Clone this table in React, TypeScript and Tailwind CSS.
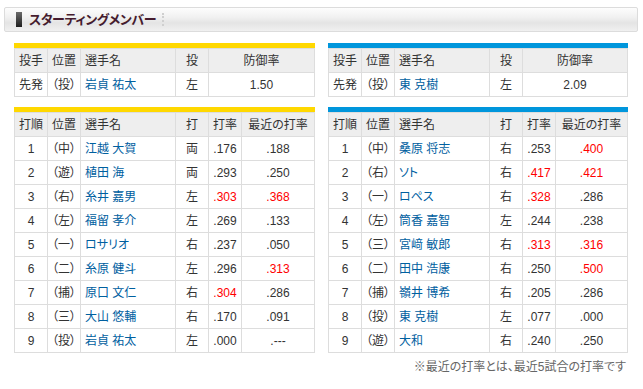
import React from 'react';

type Batter = [string, string, string, string, string, string, boolean, boolean];

const tigers: Batter[] = [
  ['1', '（中）', '江越 大賀', '両', '.176', '.188', false, false],
  ['2', '（遊）', '植田 海', '両', '.293', '.250', false, false],
  ['3', '（右）', '糸井 嘉男', '左', '.303', '.368', true, true],
  ['4', '（左）', '福留 孝介', '左', '.269', '.133', false, false],
  ['5', '（一）', 'ロサリオ', '右', '.237', '.050', false, false],
  ['6', '（二）', '糸原 健斗', '左', '.296', '.313', false, true],
  ['7', '（捕）', '原口 文仁', '右', '.304', '.286', true, false],
  ['8', '（三）', '大山 悠輔', '右', '.170', '.091', false, false],
  ['9', '（投）', '岩貞 祐太', '左', '.000', '.---', false, false],
];

const baystars: Batter[] = [
  ['1', '（中）', '桑原 将志', '右', '.253', '.400', false, true],
  ['2', '（右）', 'ソト', '右', '.417', '.421', true, true],
  ['3', '（一）', 'ロペス', '右', '.328', '.286', true, false],
  ['4', '（左）', '筒香 嘉智', '左', '.244', '.238', false, false],
  ['5', '（三）', '宮﨑 敏郎', '右', '.313', '.316', true, true],
  ['6', '（二）', '田中 浩康', '右', '.250', '.500', false, true],
  ['7', '（捕）', '嶺井 博希', '右', '.205', '.286', false, false],
  ['8', '（投）', '東 克樹', '左', '.077', '.000', false, false],
  ['9', '（遊）', '大和', '右', '.240', '.250', false, false],
];

const head = 'h-[23px] bg-[#eeeeee] flex items-center justify-center';
const cell = 'h-[23px] bg-white flex items-center justify-center';
const nameHead = 'h-[23px] bg-[#eeeeee] flex items-center pl-[4px]';
const nameCell = 'h-[23px] bg-white flex items-center pl-[4px] text-[#00609f]';

const PitcherTable = ({ bar, cols, name, era }: { bar: string; cols: string; name: string; era: string }) => (
  <div>
    <div className={`h-[5px] ${bar}`} />
    <div className={`grid ${cols} gap-px bg-[#dddddd] border border-[#dddddd]`}>
      <div className={head}>投手</div>
      <div className={head}>位置</div>
      <div className={nameHead}>選手名</div>
      <div className={head}>投</div>
      <div className={head}>防御率</div>
      <div className={cell}>先発</div>
      <div className={cell}>（投）</div>
      <div className={nameCell}>{name}</div>
      <div className={cell}>左</div>
      <div className={cell}>{era}</div>
    </div>
  </div>
);

const BattingTable = ({ bar, cols, rows }: { bar: string; cols: string; rows: Batter[] }) => (
  <div>
    <div className={`h-[5px] ${bar}`} />
    <div className={`grid ${cols} gap-px bg-[#dddddd] border border-[#dddddd]`}>
      <div className={head}>打順</div>
      <div className={head}>位置</div>
      <div className={nameHead}>選手名</div>
      <div className={head}>打</div>
      <div className={head}>打率</div>
      <div className={head}>最近の打率</div>
      {rows.map(r => (
        <React.Fragment key={r[0]}>
          <div className={cell}>{r[0]}</div>
          <div className={cell}>{r[1]}</div>
          <div className={nameCell}>{r[2]}</div>
          <div className={cell}>{r[3]}</div>
          <div className={`${cell} ${r[6] ? 'text-[#ff0000]' : ''}`}>{r[4]}</div>
          <div className={`${cell} ${r[7] ? 'text-[#ff0000]' : ''}`}>{r[5]}</div>
        </React.Fragment>
      ))}
    </div>
  </div>
);

export default function App() {
  return (
    <div className="w-[643px] h-[389px] bg-white pl-[4px] pt-[7px] text-[12px] leading-none text-[#333333] [font-family:'Liberation_Sans','Noto_Sans_CJK_JP',sans-serif] [font-feature-settings:'palt']">
      {/* title bar */}
      <div className="w-[634px] h-[25px] border border-[#dcdcdc] rounded-[2px] bg-[linear-gradient(to_bottom,#fdfdfd_0%,#f1f1f1_40%,#e4e4e4_65%,#f0f0f0_100%)] flex items-center pl-[11px]">
        <div className="w-[6px] h-[15px] bg-[linear-gradient(to_bottom,#6a6a6a,#1e1e1e)]" />
        <div className="ml-[7px] text-[13px] font-bold text-[#451b2e] tracking-[-0.4px]">スターティングメンバー</div>
        <div className="ml-[6px] h-[13px] border-l-2 border-dotted border-[#cfcfcf]" />
      </div>

      <div className="ml-[10px] mt-[11px] flex gap-[13px]">
        <div className="w-[301px] flex flex-col gap-[10px]">
          <PitcherTable bar="bg-[#ffd800]" cols="grid-cols-[32px_32px_94px_32px_105px]" name="岩貞 祐太" era="1.50" />
          <BattingTable bar="bg-[#ffd800]" cols="grid-cols-[32px_32px_94px_32px_32px_72px]" rows={tigers} />
        </div>
        <div className="w-[300px] flex flex-col gap-[10px]">
          <PitcherTable bar="bg-[#0096dc]" cols="grid-cols-[32px_32px_94px_32px_104px]" name="東 克樹" era="2.09" />
          <BattingTable bar="bg-[#0096dc]" cols="grid-cols-[32px_32px_94px_32px_32px_71px]" rows={baystars} />
          <div className="-mt-[5px] pr-[2px] text-right text-[#666666] leading-[18px]">※最近の打率とは、最近5試合の打率です</div>
        </div>
      </div>
    </div>
  );
}
